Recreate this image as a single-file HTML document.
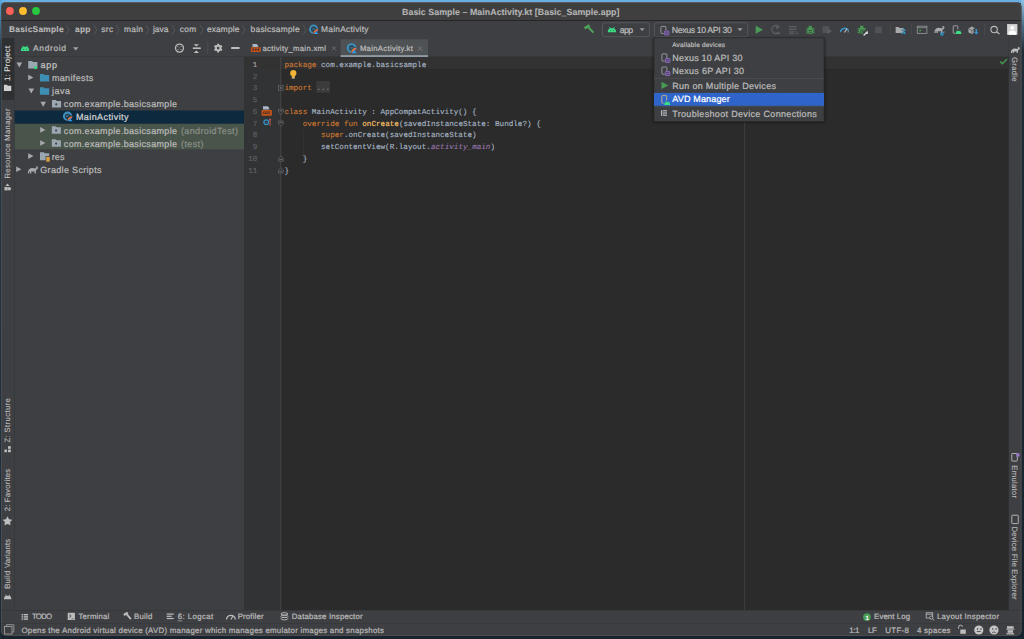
<!DOCTYPE html>
<html><head><meta charset="utf-8"><title>Android Studio</title>
<style>
*{margin:0;padding:0}
html,body{width:1024px;height:639px;overflow:hidden;background:#1b2630}
svg{position:absolute;left:0;top:0;display:block}
text{white-space:pre}
</style></head><body>
<svg width="1024" height="639" viewBox="0 0 1024 639" text-rendering="geometricPrecision">
<defs><linearGradient id="gl" x1="0" y1="0" x2="0" y2="1"><stop offset="0" stop-color="#5aa6e0"/><stop offset="0.03" stop-color="#3f7aa6"/><stop offset="0.08" stop-color="#203444"/><stop offset="1" stop-color="#1a2a35"/></linearGradient><linearGradient id="gr" x1="0" y1="0" x2="0" y2="1"><stop offset="0" stop-color="#8fc0e4"/><stop offset="0.04" stop-color="#4a6f8a"/><stop offset="0.08" stop-color="#1d2c36"/><stop offset="1" stop-color="#17232c"/></linearGradient><clipPath id="wclip"><rect x="1" y="2" width="1020.5" height="633.8" rx="5"/></clipPath></defs>
<rect x="0" y="0" width="1024" height="639" fill="#17232d" />
<rect x="0" y="0" width="1024" height="3" fill="#66aee2" />
<rect x="0" y="0" width="2" height="639" fill="url(#gl)" />
<rect x="1021" y="0" width="3" height="639" fill="url(#gr)" />
<g clip-path="url(#wclip)">
<rect x="0" y="0" width="1024" height="639" fill="#3e3f42" />
<rect x="0" y="0" width="1024" height="20" fill="#3e3f3e" />
<rect x="0" y="2" width="1024" height="0.6" fill="#5a5a5a" />
<rect x="0" y="20" width="1024" height="1" fill="#262626" />
<circle cx="9.9" cy="11" r="3.9" fill="#fe5f57" />
<circle cx="23" cy="11" r="3.9" fill="#febc2e" />
<circle cx="36" cy="11" r="3.9" fill="#28c840" />
<text x="402" y="14.6" fill="#b4b4b4" font-size="8.84" font-family='"Liberation Sans", sans-serif' font-weight="bold" textLength="217.5" lengthAdjust="spacing" stroke="#b4b4b4" stroke-width="0.11">Basic Sample – MainActivity.kt [Basic_Sample.app]</text>
<rect x="0" y="21" width="1024" height="17" fill="#3e3f42" />
<rect x="0" y="38.4" width="1024" height="0.7" fill="#333435" />
<text x="9" y="32.4" fill="#bbbbbb" font-size="8.36" font-family='"Liberation Sans", sans-serif' font-weight="bold" textLength="54.6" lengthAdjust="spacing" stroke="#bbbbbb" stroke-width="0.11">BasicSample</text>
<text x="75" y="32.4" fill="#bbbbbb" font-size="8.36" font-family='"Liberation Sans", sans-serif' font-weight="bold" textLength="15.4" lengthAdjust="spacing" stroke="#bbbbbb" stroke-width="0.11">app</text>
<text x="101.3" y="32.4" fill="#bbbbbb" font-size="8.36" font-family='"Liberation Sans", sans-serif' textLength="11.9" lengthAdjust="spacing" stroke="#bbbbbb" stroke-width="0.22">src</text>
<text x="124" y="32.4" fill="#bbbbbb" font-size="8.36" font-family='"Liberation Sans", sans-serif' textLength="18.9" lengthAdjust="spacing" stroke="#bbbbbb" stroke-width="0.22">main</text>
<text x="153" y="32.4" fill="#bbbbbb" font-size="8.36" font-family='"Liberation Sans", sans-serif' textLength="15.3" lengthAdjust="spacing" stroke="#bbbbbb" stroke-width="0.22">java</text>
<text x="179.8" y="32.4" fill="#bbbbbb" font-size="8.36" font-family='"Liberation Sans", sans-serif' textLength="16.4" lengthAdjust="spacing" stroke="#bbbbbb" stroke-width="0.22">com</text>
<text x="206.9" y="32.4" fill="#bbbbbb" font-size="8.36" font-family='"Liberation Sans", sans-serif' textLength="32.4" lengthAdjust="spacing" stroke="#bbbbbb" stroke-width="0.22">example</text>
<text x="250.6" y="32.4" fill="#bbbbbb" font-size="8.36" font-family='"Liberation Sans", sans-serif' textLength="49.0" lengthAdjust="spacing" stroke="#bbbbbb" stroke-width="0.22">basicsample</text>
<path d="M66,25 L69.2,29.9 L66,34.8" fill="none" stroke="#595c5e" stroke-width="0.75" />
<path d="M93.7,25 L96.9,29.9 L93.7,34.8" fill="none" stroke="#595c5e" stroke-width="0.75" />
<path d="M116,25 L119.2,29.9 L116,34.8" fill="none" stroke="#595c5e" stroke-width="0.75" />
<path d="M145.6,25 L148.79999999999998,29.9 L145.6,34.8" fill="none" stroke="#595c5e" stroke-width="0.75" />
<path d="M171.6,25 L174.79999999999998,29.9 L171.6,34.8" fill="none" stroke="#595c5e" stroke-width="0.75" />
<path d="M200,25 L203.2,29.9 L200,34.8" fill="none" stroke="#595c5e" stroke-width="0.75" />
<path d="M242,25 L245.2,29.9 L242,34.8" fill="none" stroke="#595c5e" stroke-width="0.75" />
<path d="M303,25 L306.2,29.9 L303,34.8" fill="none" stroke="#595c5e" stroke-width="0.75" />
<circle cx="313.6" cy="29.2" r="3.5879999999999996" fill="none" stroke="#3d8fbd" stroke-width="2.024"/>
<circle cx="313.6" cy="29.2" r="2.576" fill="#2c4656" />
<path d="M312.22,29.099999999999998 h2.76" fill="none" stroke="#3d8fbd" stroke-width="0.828" />
<path d="M313.192,34.622 L319.322,28.491999999999997 L315.624,28.491999999999997 L312.892,31.223999999999997 z" fill="#3e3f42" />
<path d="M313.692,34.122 L318.522,29.291999999999998 L316.107,29.291999999999998 L313.692,31.706999999999997 z" fill="#f18e1c" />
<path d="M313.692,34.122 L318.522,29.291999999999998 L317.3145,29.291999999999998 L313.692,32.9145 z" fill="#d0508a" />
<path d="M313.392,34.422 L316.107,31.506999999999998 L318.822,34.422 z" fill="#3e3f42" />
<path d="M313.692,34.122 L316.107,31.706999999999997 L318.522,34.122 z" fill="#2ea2f0" />
<text x="321" y="32.4" fill="#bbbbbb" font-size="8.36" font-family='"Liberation Sans", sans-serif' textLength="47.5" lengthAdjust="spacing" stroke="#bbbbbb" stroke-width="0.22">MainActivity</text>
<line x1="584.6" y1="28.4" x2="589.4" y2="25.4" stroke="#4fa35a" stroke-width="2.5" />
<line x1="588.2" y1="27.0" x2="593.4" y2="32.6" stroke="#4fa35a" stroke-width="2.1" />
<rect x="602.5" y="22.8" width="46.9" height="13.9" fill="none" rx="2" stroke="#5b5e60" stroke-width="0.8"/>
<path d="M607.8,32.3 C607.8,28.609999999999996 609.4399999999999,28.199999999999996 611.9,28.199999999999996 C614.3599999999999,28.199999999999996 616.0,28.609999999999996 616.0,32.3 z" fill="#3ddc84" />
<line x1="609.6039999999999" y1="27.051999999999996" x2="610.506" y2="29.224999999999994" stroke="#3ddc84" stroke-width="0.82" />
<line x1="614.1959999999999" y1="27.051999999999996" x2="613.294" y2="29.224999999999994" stroke="#3ddc84" stroke-width="0.82" />
<circle cx="610.26" cy="30.455" r="0.49199999999999994" fill="#3e3f42" />
<circle cx="613.54" cy="30.455" r="0.49199999999999994" fill="#3e3f42" />
<text x="619.7" y="32.6" fill="#bbbbbb" font-size="8.74" font-family='"Liberation Sans", sans-serif' textLength="13.3" lengthAdjust="spacing" stroke="#bbbbbb" stroke-width="0.22">app</text>
<path d="M639.6,28.3 h5 l-2.5,2.8 z" fill="#9a9da0" />
<rect x="654.4" y="22.8" width="93.3" height="13.9" fill="none" rx="2" stroke="#5b5e60" stroke-width="0.8"/>
<rect x="660.9" y="26.400000000000002" width="5" height="7.2" fill="none" rx="0.8" stroke="#9ca3aa" stroke-width="0.9"/>
<rect x="663.6" y="30.400000000000002" width="5.6" height="5" fill="#3e3f42" />
<rect x="664.3" y="31.0" width="4.6" height="4.0" fill="#5a4377" rx="0.6" stroke="#9876c8" stroke-width="0.8"/>
<line x1="665.2" y1="33.0" x2="668.0" y2="33.0" stroke="#9876c8" stroke-width="0.6" />
<text x="671.7" y="32.6" fill="#bbbbbb" font-size="8.74" font-family='"Liberation Sans", sans-serif' textLength="60.1" lengthAdjust="spacing" stroke="#bbbbbb" stroke-width="0.22">Nexus 10 API 30</text>
<path d="M737.3,28.3 h5.4 l-2.7,2.8 z" fill="#9a9da0" />
<path d="M755.7,25.7 L763,29.7 L755.7,33.7 z" fill="#499c54" />
<path d="M779,27 A4,4 0 1 0 779,32" fill="none" stroke="#5a5d60" stroke-width="1.3" />
<path d="M776,24.8 l3.8,2.4 l-3.4,2.2 z" fill="#5a5d60" />
<path d="M777,32.5 l3,1.5 M777,34 l3,-1.5" fill="none" stroke="#5a5d60" stroke-width="0.9" />
<rect x="789" y="26" width="7.5" height="1.4" fill="#5a5d60" />
<rect x="789" y="28.6" width="7.5" height="1.4" fill="#5a5d60" />
<rect x="789" y="31.2" width="5" height="1.4" fill="#5a5d60" />
<rect x="789" y="33.3" width="5" height="1" fill="#5a5d60" />
<path d="M796,31 v2.5 h2.5" fill="none" stroke="#5a5d60" stroke-width="0.9" />
<ellipse cx="810.3" cy="30.7" rx="2.9" ry="3.3" fill="#499c54"/>
<circle cx="810.3" cy="27.6" r="1.7" fill="#499c54" />
<line x1="808.6999999999999" y1="25.5" x2="809.5" y2="26.7" stroke="#499c54" stroke-width="0.8" />
<line x1="811.9" y1="25.5" x2="811.0999999999999" y2="26.7" stroke="#499c54" stroke-width="0.8" />
<line x1="806.0999999999999" y1="28.900000000000002" x2="807.9" y2="28.900000000000002" stroke="#499c54" stroke-width="1.0" />
<line x1="812.6999999999999" y1="28.900000000000002" x2="814.5" y2="28.900000000000002" stroke="#499c54" stroke-width="1.0" />
<line x1="806.0999999999999" y1="30.900000000000002" x2="807.9" y2="30.900000000000002" stroke="#499c54" stroke-width="1.0" />
<line x1="812.6999999999999" y1="30.900000000000002" x2="814.5" y2="30.900000000000002" stroke="#499c54" stroke-width="1.0" />
<line x1="806.0999999999999" y1="32.9" x2="807.9" y2="32.9" stroke="#499c54" stroke-width="1.0" />
<line x1="812.6999999999999" y1="32.9" x2="814.5" y2="32.9" stroke="#499c54" stroke-width="1.0" />
<rect x="808.5" y="29.900000000000002" width="3.6" height="0.8" fill="#3e3f42" />
<rect x="808.5" y="31.8" width="3.6" height="0.8" fill="#3e3f42" />
<path d="M822.5,26 h5 a2,2 0 0 1 2,2 v3 l-2,2 h-5 z" fill="#505356" />
<path d="M827.5,28.5 L832,31.3 L827.5,34 z" fill="#5a5d60" />
<path d="M840.5,32.3 A4.3,4.3 0 0 1 848.5,30.5" fill="none" stroke="#3592c4" stroke-width="1.5" />
<path d="M844.5,32.5 l2.5,-4" fill="none" stroke="#bbbbbb" stroke-width="1.2" />
<path d="M847.2,32.3 l1.6,-1.6 v1.6 z" fill="#aaaaaa" />
<ellipse cx="861.8" cy="30.5" rx="2.9" ry="3.3" fill="#499c54"/>
<circle cx="861.8" cy="27.400000000000002" r="1.7" fill="#499c54" />
<line x1="860.1999999999999" y1="25.3" x2="861.0" y2="26.5" stroke="#499c54" stroke-width="0.8" />
<line x1="863.4" y1="25.3" x2="862.5999999999999" y2="26.5" stroke="#499c54" stroke-width="0.8" />
<line x1="857.5999999999999" y1="28.700000000000003" x2="859.4" y2="28.700000000000003" stroke="#499c54" stroke-width="1.0" />
<line x1="864.1999999999999" y1="28.700000000000003" x2="866.0" y2="28.700000000000003" stroke="#499c54" stroke-width="1.0" />
<line x1="857.5999999999999" y1="30.700000000000003" x2="859.4" y2="30.700000000000003" stroke="#499c54" stroke-width="1.0" />
<line x1="864.1999999999999" y1="30.700000000000003" x2="866.0" y2="30.700000000000003" stroke="#499c54" stroke-width="1.0" />
<line x1="857.5999999999999" y1="32.7" x2="859.4" y2="32.7" stroke="#499c54" stroke-width="1.0" />
<line x1="864.1999999999999" y1="32.7" x2="866.0" y2="32.7" stroke="#499c54" stroke-width="1.0" />
<rect x="860.0" y="29.700000000000003" width="3.6" height="0.8" fill="#3e3f42" />
<rect x="860.0" y="31.6" width="3.6" height="0.8" fill="#3e3f42" />
<rect x="863.2" y="30.6" width="5.5" height="5.5" fill="#3e3f42" />
<path d="M863.6,35.5 l3.6,-3.6" fill="none" stroke="#dddddd" stroke-width="1.3" />
<path d="M867.8,30.8 v3.3 h-3.3 z" fill="#dddddd" />
<rect x="875.2" y="26.6" width="6.8" height="6.6" fill="#505356" />
<line x1="890.2" y1="23.5" x2="890.2" y2="35" stroke="#4a4d4f" stroke-width="0.8" />
<line x1="911.4" y1="23.5" x2="911.4" y2="35" stroke="#4a4d4f" stroke-width="0.8" />
<line x1="984.5" y1="23.5" x2="984.5" y2="35" stroke="#4a4d4f" stroke-width="0.8" />
<path d="M895.6,27 h3 l1,1 h4 v5 h-8 z" fill="#a7a9ab" />
<rect x="901.5" y="29.2" width="1.6" height="1.8" fill="#3592c4" />
<rect x="903.8" y="29.2" width="1.6" height="1.8" fill="#3592c4" />
<rect x="901.5" y="31.8" width="1.6" height="2.2" fill="#3592c4" />
<rect x="903.8" y="31.8" width="1.6" height="2.2" fill="#3592c4" />
<rect x="917.3" y="26.2" width="9.6" height="7.2" fill="none" stroke="#8e9194" stroke-width="0.9"/>
<line x1="917.3" y1="27.6" x2="926.9" y2="27.6" stroke="#8e9194" stroke-width="0.8" />
<path d="M919.5,29 l2.3,1.4 l-2.3,1.4 z" fill="#499c54" />
<path d="M934.3,33 c0,-3.5 2,-5.2 4.6,-5.2 c1.7,0 2.6,0.8 3.6,0.1 c0.7,-0.5 0.4,-1.6 -0.5,-1.5 c1.4,-0.9 2.9,0.2 2.4,1.7 c-0.4,1.2 -1.6,1.5 -2,2.1 v2.8 h-1.4 v-1.8 h-3.2 v1.8 h-1.4 v-1.8 h-0.8 v1.8 z" fill="#a7a9ab" />
<path d="M941,35 l3.5,-3.5" fill="none" stroke="#3592c4" stroke-width="1.3" />
<path d="M940.5,31.8 v3.6 h3.6 z" fill="#3592c4" />
<rect x="953.2" y="25.8" width="4.6" height="7.5" fill="none" rx="0.6" stroke="#a7a9ab" stroke-width="0.9"/>
<rect x="955" y="29.4" width="6.8" height="5" fill="#3e3f42" />
<path d="M955.6,34.0 C955.6,31.39 956.76,31.1 958.5,31.1 C960.24,31.1 961.4,31.39 961.4,34.0 z" fill="#3ddc84" />
<line x1="956.876" y1="30.288" x2="957.514" y2="31.825000000000003" stroke="#3ddc84" stroke-width="0.6" />
<line x1="960.124" y1="30.288" x2="959.486" y2="31.825000000000003" stroke="#3ddc84" stroke-width="0.6" />
<path d="M968.4,28.5 l3.5,-1.9 l3.5,1.9 v3.8 l-3.5,1.9 l-3.5,-1.9 z" fill="#a7a9ab" />
<path d="M968.4,28.5 l3.5,1.9 l3.5,-1.9 M971.9,30.4 v3.8" fill="none" stroke="#3e3f42" stroke-width="0.6" />
<rect x="973.6" y="28.6" width="5.4" height="6.6" fill="#3e3f42" />
<path d="M976.3,29 v3.4" fill="none" stroke="#3592c4" stroke-width="1.7" />
<path d="M974.1,32.0 h4.4 l-2.2,2.7 z" fill="#3592c4" />
<circle cx="994.1" cy="29.6" r="3.2" fill="none" stroke="#bbbbbb" stroke-width="1.1"/>
<line x1="996.5" y1="32" x2="999.6" y2="34" stroke="#bbbbbb" stroke-width="1.2" />
<rect x="1007.1" y="24.1" width="10.3" height="10.7" fill="#d6d6d6" />
<circle cx="1012.3" cy="27.8" r="1.9" fill="#ffffff" />
<path d="M1008.6,34.8 v-1.6 a3.7,2.6 0 0 1 7.4,0 v1.6 z" fill="#ffffff" />
<rect x="1" y="38" width="13" height="572" fill="#3e3f42" />
<rect x="1.5" y="38" width="12.6" height="61.7" fill="#2e3032" />
<rect x="14" y="38" width="0.7" height="572" fill="#323436" />
<text x="0" y="0" fill="#dadada" font-size="8.0" font-family='"Liberation Sans", sans-serif' textLength="35.2" lengthAdjust="spacing" transform="translate(10.4,81.0) rotate(-90)" stroke="#dadada" stroke-width="0.12">1: Project</text>
<path d="M3.9,84.8 h3 l1,1 h3.4 v5.2 h-7.4 z" fill="#d0d0d0" />
<text x="0" y="0" fill="#bbbbbb" font-size="7.7" font-family='"Liberation Sans", sans-serif' textLength="70.0" lengthAdjust="spacing" transform="translate(10.1,178.5) rotate(-90)" stroke="#bbbbbb" stroke-width="0.12">Resource Manager</text>
<path d="M7.5,183.5 l2,2.6 h-4 z" fill="#bdbdbd" />
<rect x="4.5" y="187" width="3.2" height="3.4" fill="#bdbdbd" />
<circle cx="9.3" cy="188.7" r="1.7" fill="#bdbdbd" />
<text x="0" y="0" fill="#bbbbbb" font-size="7.7" font-family='"Liberation Sans", sans-serif' textLength="44.4" lengthAdjust="spacing" transform="translate(10.1,442.6) rotate(-90)" stroke="#bbbbbb" stroke-width="0.12">Z: Structure</text>
<rect x="4.4" y="449.6" width="2.6" height="2.6" fill="#bdbdbd" />
<rect x="8.0" y="446.2" width="2.8" height="2.6" fill="#bdbdbd" />
<rect x="8.0" y="449.6" width="2.8" height="2.6" fill="#bdbdbd" />
<text x="0" y="0" fill="#bbbbbb" font-size="7.7" font-family='"Liberation Sans", sans-serif' textLength="42.5" lengthAdjust="spacing" transform="translate(10.1,511.3) rotate(-90)" stroke="#bbbbbb" stroke-width="0.12">2: Favorites</text>
<path d="M7.5,516.3 l1.6,2.9 l3.2,0.6 l-2.2,2.3 l0.4,3.2 l-3,-1.4 l-3,1.4 l0.4,-3.2 l-2.2,-2.3 l3.2,-0.6 z" fill="#bdbdbd" />
<text x="0" y="0" fill="#bbbbbb" font-size="7.7" font-family='"Liberation Sans", sans-serif' textLength="50.0" lengthAdjust="spacing" transform="translate(10.1,588.8) rotate(-90)" stroke="#bbbbbb" stroke-width="0.12">Build Variants</text>
<path d="M4.0,599.3 C4.0,596.015 5.46,595.65 7.65,595.65 C9.84,595.65 11.3,596.015 11.3,599.3 z" fill="#bdbdbd" />
<line x1="5.606" y1="594.6279999999999" x2="6.409000000000001" y2="596.5625" stroke="#bdbdbd" stroke-width="0.73" />
<line x1="9.693999999999999" y1="594.6279999999999" x2="8.891" y2="596.5625" stroke="#bdbdbd" stroke-width="0.73" />
<rect x="1008.6" y="38" width="13" height="572" fill="#3e3f42" />
<rect x="1008.4" y="38" width="0.6" height="572" fill="#323436" />
<path d="M1010.8,53 c0,-3 1.7,-4.6 4,-4.6 c1.5,0 2.3,0.7 3.2,0.1 c0.6,-0.4 0.3,-1.4 -0.4,-1.3 c1.2,-0.8 2.5,0.2 2.1,1.5 c-0.3,1 -1.4,1.3 -1.8,1.8 v2.5 h-1.2 v-1.6 h-2.8 v1.6 h-1.2 v-1.6 h-0.7 v1.6 z" fill="#bdbdbd" />
<text x="0" y="0" fill="#bbbbbb" font-size="7.7" font-family='"Liberation Sans", sans-serif' textLength="24.6" lengthAdjust="spacing" transform="translate(1012.1999999999999,57) rotate(90)" stroke="#bbbbbb" stroke-width="0.12">Gradle</text>
<rect x="1011.8" y="453.5" width="5.5" height="7.6" fill="none" rx="0.6" stroke="#bdbdbd" stroke-width="0.9"/>
<rect x="1016.3" y="453.3" width="3.2" height="3.2" fill="#9876c8" />
<text x="0" y="0" fill="#bbbbbb" font-size="7.7" font-family='"Liberation Sans", sans-serif' textLength="32.7" lengthAdjust="spacing" transform="translate(1012.1999999999999,465.3) rotate(90)" stroke="#bbbbbb" stroke-width="0.12">Emulator</text>
<rect x="1011.8" y="515.2" width="6.5" height="8.4" fill="none" rx="0.6" stroke="#bdbdbd" stroke-width="0.9"/>
<text x="0" y="0" fill="#bbbbbb" font-size="7.7" font-family='"Liberation Sans", sans-serif' textLength="73.2" lengthAdjust="spacing" transform="translate(1012.1999999999999,526.4) rotate(90)" stroke="#bbbbbb" stroke-width="0.12">Device File Explorer</text>
<rect x="14.7" y="38" width="229.3" height="572" fill="#3e3f42" />
<rect x="14.7" y="56.2" width="229.3" height="0.6" fill="#323436" />
<path d="M20.9,51.0 C20.9,47.265 22.56,46.85 25.049999999999997,46.85 C27.54,46.85 29.2,47.265 29.2,51.0 z" fill="#3ddc84" />
<line x1="22.726" y1="45.688" x2="23.639" y2="47.8875" stroke="#3ddc84" stroke-width="0.8300000000000001" />
<line x1="27.374" y1="45.688" x2="26.461" y2="47.8875" stroke="#3ddc84" stroke-width="0.8300000000000001" />
<circle cx="23.39" cy="49.1325" r="0.498" fill="#3e3f42" />
<circle cx="26.71" cy="49.1325" r="0.498" fill="#3e3f42" />
<text x="33.1" y="51.1" fill="#bbbbbb" font-size="8.46" font-family='"Liberation Sans", sans-serif' textLength="32.9" lengthAdjust="spacing" stroke="#bbbbbb" stroke-width="0.22">Android</text>
<path d="M73,47.2 h5.5 l-2.75,3.3 z" fill="#a0a3a5" />
<circle cx="179.5" cy="48.1" r="4.0" fill="none" stroke="#bdbdbd" stroke-width="1.3"/>
<line x1="180.34852813742387" y1="48.94852813742386" x2="181.76274169979695" y2="50.362741699796956" stroke="#a9abad" stroke-width="0.9" />
<line x1="178.65147186257613" y1="48.94852813742386" x2="177.23725830020305" y2="50.362741699796956" stroke="#a9abad" stroke-width="0.9" />
<line x1="178.65147186257613" y1="47.251471862576146" x2="177.23725830020305" y2="45.83725830020305" stroke="#a9abad" stroke-width="0.9" />
<line x1="180.34852813742387" y1="47.251471862576146" x2="181.76274169979695" y2="45.83725830020305" stroke="#a9abad" stroke-width="0.9" />
<path d="M193.6,44.2 h5.4 l-2.7,2.4 z" fill="#bdbdbd" />
<path d="M193.6,53.0 h5.4 l-2.7,-2.4 z" fill="#bdbdbd" />
<rect x="192.8" y="47.4" width="8" height="1.6" fill="#bdbdbd" />
<line x1="207.7" y1="41.5" x2="207.7" y2="54" stroke="#4f5254" stroke-width="0.8" />
<line x1="220.10525588832576" y1="49.2" x2="221.92390923627306" y2="50.25" stroke="#bdbdbd" stroke-width="2.0" />
<line x1="218.2" y1="50.300000000000004" x2="218.2" y2="52.4" stroke="#bdbdbd" stroke-width="2.0" />
<line x1="216.29474411167422" y1="49.2" x2="214.47609076372692" y2="50.25" stroke="#bdbdbd" stroke-width="2.0" />
<line x1="216.29474411167422" y1="47.0" x2="214.47609076372692" y2="45.95" stroke="#bdbdbd" stroke-width="2.0" />
<line x1="218.2" y1="45.9" x2="218.2" y2="43.800000000000004" stroke="#bdbdbd" stroke-width="2.0" />
<line x1="220.10525588832576" y1="47.0" x2="221.92390923627306" y2="45.95" stroke="#bdbdbd" stroke-width="2.0" />
<circle cx="218.2" cy="48.1" r="3.3" fill="#bdbdbd" />
<circle cx="218.2" cy="48.1" r="1.3" fill="#3e3f42" />
<rect x="231.1" y="47.0" width="8.5" height="2.0" fill="#bdbdbd" rx="0.5" />
<rect x="14.7" y="110.5" width="229.3" height="13.3" fill="#0d293e" />
<rect x="14.7" y="123.8" width="229.3" height="25.6" fill="#49544a" />
<path d="M16.5,62.4 h5.6 l-2.8,5 z" fill="#a7a9ab" />
<path d="M28.2,61 h3.8 l1,1 h4.4 v6.6 h-9.2 z" fill="#9aa7b0" />
<circle cx="35.6" cy="67.6" r="1.6" fill="#3ddc84" />
<text x="40.4" y="68.0" fill="#c4c4c4" font-size="9.03" font-family='"Liberation Sans", sans-serif' textLength="16.6" lengthAdjust="spacing" stroke="#c4c4c4" stroke-width="0.22">app</text>
<path d="M28.2,74.69999999999999 v5.6 l5.2,-2.8 z" fill="#a7a9ab" />
<path d="M39.9,74.1 h3.8 l1,1 h4.5 v6.5 h-9.3 z" fill="#3e8db3" />
<text x="51.9" y="81.1" fill="#bbbbbb" font-size="9.03" font-family='"Liberation Sans", sans-serif' textLength="41.4" lengthAdjust="spacing" stroke="#bbbbbb" stroke-width="0.22">manifests</text>
<path d="M28.5,88.60000000000001 h5.6 l-2.8,5 z" fill="#a7a9ab" />
<path d="M39.9,87.2 h3.8 l1,1 h4.5 v6.5 h-9.3 z" fill="#3e8db3" />
<text x="51.9" y="94.2" fill="#bbbbbb" font-size="9.03" font-family='"Liberation Sans", sans-serif' textLength="18.1" lengthAdjust="spacing" stroke="#bbbbbb" stroke-width="0.22">java</text>
<path d="M40.4,101.7 h5.6 l-2.8,5 z" fill="#a7a9ab" />
<path d="M52,100.0 h3.8 l1,1 h4.3 v6.5 h-9.1 z" fill="#9aa7b0" />
<circle cx="56.3" cy="104.3" r="1.1" fill="#3e3f42" />
<text x="63.8" y="107.3" fill="#bbbbbb" font-size="9.03" font-family='"Liberation Sans", sans-serif' textLength="113.2" lengthAdjust="spacing" stroke="#bbbbbb" stroke-width="0.22">com.example.basicsample</text>
<circle cx="67.6" cy="116.3" r="3.6660000000000004" fill="none" stroke="#3d8fbd" stroke-width="2.068"/>
<circle cx="67.6" cy="116.3" r="2.6320000000000006" fill="#2c4656" />
<path d="M66.19,116.2 h2.82" fill="none" stroke="#3d8fbd" stroke-width="0.846" />
<path d="M67.19399999999999,121.829 L73.42899999999999,115.594 L69.66799999999999,115.594 L66.89399999999999,118.368 z" fill="#0d293e" />
<path d="M67.69399999999999,121.329 L72.62899999999999,116.39399999999999 L70.16149999999999,116.39399999999999 L67.69399999999999,118.86149999999999 z" fill="#f18e1c" />
<path d="M67.69399999999999,121.329 L72.62899999999999,116.39399999999999 L71.39524999999999,116.39399999999999 L67.69399999999999,120.09525 z" fill="#d0508a" />
<path d="M67.39399999999999,121.62899999999999 L70.16149999999999,118.66149999999999 L72.92899999999999,121.62899999999999 z" fill="#0d293e" />
<path d="M67.69399999999999,121.329 L70.16149999999999,118.86149999999999 L72.62899999999999,121.329 z" fill="#2ea2f0" />
<text x="75.9" y="120.4" fill="#d4d4d4" font-size="9.03" font-family='"Liberation Sans", sans-serif' textLength="52.6" lengthAdjust="spacing" stroke="#d4d4d4" stroke-width="0.22">MainActivity</text>
<path d="M40.2,127.1 v5.6 l5.2,-2.8 z" fill="#a7a9ab" />
<path d="M51.8,126.2 h3.8 l1,1 h4.3 v6.5 h-9.1 z" fill="#9aa7b0" />
<circle cx="56.099999999999994" cy="130.5" r="1.1" fill="#3e3f42" />
<text x="63.8" y="133.5" fill="#bbbbbb" font-size="9.03" font-family='"Liberation Sans", sans-serif' textLength="113.2" lengthAdjust="spacing" stroke="#bbbbbb" stroke-width="0.22">com.example.basicsample</text>
<text x="181" y="133.5" fill="#8a8f89" font-size="9.03" font-family='"Liberation Sans", sans-serif' textLength="57" lengthAdjust="spacing" stroke="#8a8f89" stroke-width="0.22">(androidTest)</text>
<path d="M40.2,140.2 v5.6 l5.2,-2.8 z" fill="#a7a9ab" />
<path d="M51.8,139.29999999999998 h3.8 l1,1 h4.3 v6.5 h-9.1 z" fill="#9aa7b0" />
<circle cx="56.099999999999994" cy="143.6" r="1.1" fill="#3e3f42" />
<text x="63.8" y="146.6" fill="#bbbbbb" font-size="9.03" font-family='"Liberation Sans", sans-serif' textLength="113.2" lengthAdjust="spacing" stroke="#bbbbbb" stroke-width="0.22">com.example.basicsample</text>
<text x="181" y="146.6" fill="#8a8f89" font-size="9.03" font-family='"Liberation Sans", sans-serif' textLength="22.5" lengthAdjust="spacing" stroke="#8a8f89" stroke-width="0.22">(test)</text>
<path d="M28.2,153.29999999999998 v5.6 l5.2,-2.8 z" fill="#a7a9ab" />
<path d="M40,152.29999999999998 h3.8 l1,1 h4.4 v7 h-9.2 z" fill="#9aa7b0" />
<rect x="45.6" y="156.1" width="4.4" height="5.6" fill="#3e3f42" />
<rect x="46.2" y="156.89999999999998" width="3.6" height="4.8" fill="#d69d42" />
<text x="51.8" y="159.7" fill="#bbbbbb" font-size="9.03" font-family='"Liberation Sans", sans-serif' textLength="12.6" lengthAdjust="spacing" stroke="#bbbbbb" stroke-width="0.22">res</text>
<path d="M16.2,166.4 v5.6 l5.2,-2.8 z" fill="#a7a9ab" />
<path d="M27.8,173.4 c0,-3.6 2,-5.4 4.6,-5.4 c1.7,0 2.6,0.8 3.6,0.1 c0.7,-0.5 0.4,-1.6 -0.5,-1.5 c1.4,-0.9 2.9,0.2 2.4,1.7 c-0.4,1.2 -1.6,1.5 -2,2.1 v3 h-1.4 v-1.9 h-3.2 v1.9 h-1.4 v-1.9 h-0.8 v1.9 z" fill="#a7a9ab" />
<text x="40.3" y="172.8" fill="#bbbbbb" font-size="9.03" font-family='"Liberation Sans", sans-serif' textLength="61.2" lengthAdjust="spacing" stroke="#bbbbbb" stroke-width="0.22">Gradle Scripts</text>
<rect x="244" y="38" width="764.6" height="19" fill="#3e3f42" />
<rect x="244" y="56.4" width="764.6" height="0.6" fill="#323436" />
<rect x="244" y="57" width="764.6" height="553" fill="#2b2b2b" />
<rect x="244" y="57" width="36.6" height="553" fill="#313335" />
<rect x="244" y="57" width="764.6" height="11.8" fill="#323232" />
<rect x="280.4" y="57" width="0.8" height="553" fill="#4a4c4e" />
<rect x="744.2" y="57" width="0.9" height="553" fill="#414141" />
<rect x="340.7" y="39.2" width="87.3" height="17.8" fill="#4e5254" />
<rect x="340.7" y="55.1" width="87.3" height="1.9" fill="#8f9aa3" />
<path d="M252.5,47 v-3 h4 l1.5,1.5 v1.5 z" fill="#a9b7c6" />
<rect x="251" y="47.3" width="9.7" height="4.6" fill="#cc5416" />
<rect x="252.4" y="48.6" width="1.5" height="2" fill="#2b2b2b" />
<rect x="255" y="48.6" width="1.5" height="2" fill="#2b2b2b" />
<rect x="257.6" y="48.6" width="1.5" height="2" fill="#2b2b2b" />
<text x="262.5" y="50.7" fill="#bbbbbb" font-size="7.69" font-family='"Liberation Sans", sans-serif' textLength="63.5" lengthAdjust="spacing" stroke="#bbbbbb" stroke-width="0.22">activity_main.xml</text>
<path d="M332,46.3 l4,4 M336,46.3 l-4,4" fill="none" stroke="#6e7173" stroke-width="0.9" />
<circle cx="351.6" cy="48" r="3.7439999999999998" fill="none" stroke="#3d8fbd" stroke-width="2.112"/>
<circle cx="351.6" cy="48" r="2.688" fill="#2c4656" />
<path d="M350.16,47.9 h2.88" fill="none" stroke="#3d8fbd" stroke-width="0.864" />
<path d="M351.196,53.635999999999996 L357.53600000000006,47.296 L353.71200000000005,47.296 L350.896,50.111999999999995 z" fill="#4e5254" />
<path d="M351.696,53.135999999999996 L356.73600000000005,48.096 L354.216,48.096 L351.696,50.616 z" fill="#f18e1c" />
<path d="M351.696,53.135999999999996 L356.73600000000005,48.096 L355.476,48.096 L351.696,51.876 z" fill="#d0508a" />
<path d="M351.396,53.43599999999999 L354.216,50.416 L357.03600000000006,53.43599999999999 z" fill="#4e5254" />
<path d="M351.696,53.135999999999996 L354.216,50.616 L356.73600000000005,53.135999999999996 z" fill="#2ea2f0" />
<text x="359.9" y="50.7" fill="#bbbbbb" font-size="7.69" font-family='"Liberation Sans", sans-serif' textLength="53.0" lengthAdjust="spacing" stroke="#bbbbbb" stroke-width="0.22">MainActivity.kt</text>
<path d="M418.3,46.5 l4,4 M422.3,46.5 l-4,4" fill="none" stroke="#7b7e80" stroke-width="0.9" />
<text x="252.72" y="66.9" fill="#a4a3a3" font-size="7.63" font-family='"Liberation Mono", monospace' stroke="#a4a3a3" stroke-width="0.12">1</text>
<text x="252.72" y="78.655" fill="#606366" font-size="7.63" font-family='"Liberation Mono", monospace' stroke="#606366" stroke-width="0.12">2</text>
<text x="252.72" y="90.41000000000001" fill="#606366" font-size="7.63" font-family='"Liberation Mono", monospace' stroke="#606366" stroke-width="0.12">3</text>
<text x="252.72" y="102.165" fill="#606366" font-size="7.63" font-family='"Liberation Mono", monospace' stroke="#606366" stroke-width="0.12">5</text>
<text x="252.72" y="113.92000000000002" fill="#606366" font-size="7.63" font-family='"Liberation Mono", monospace' stroke="#606366" stroke-width="0.12">6</text>
<text x="252.72" y="125.67500000000001" fill="#606366" font-size="7.63" font-family='"Liberation Mono", monospace' stroke="#606366" stroke-width="0.12">7</text>
<text x="252.72" y="137.43" fill="#606366" font-size="7.63" font-family='"Liberation Mono", monospace' stroke="#606366" stroke-width="0.12">8</text>
<text x="252.72" y="149.185" fill="#606366" font-size="7.63" font-family='"Liberation Mono", monospace' stroke="#606366" stroke-width="0.12">9</text>
<text x="248.14000000000001" y="160.94" fill="#606366" font-size="7.63" font-family='"Liberation Mono", monospace' stroke="#606366" stroke-width="0.12">10</text>
<text x="248.14000000000001" y="172.695" fill="#606366" font-size="7.63" font-family='"Liberation Mono", monospace' stroke="#606366" stroke-width="0.12">11</text>
<path d="M263,109.6 v-3.4 h4.6 l1.6,1.6 v1.8 z" fill="#a9b7c6" />
<rect x="261.6" y="110" width="10.2" height="5.7" fill="#cc5416" />
<rect x="263.3" y="111.6" width="6.8" height="2.4" fill="#2b2b2b" />
<rect x="264.2" y="112" width="1.2" height="1.6" fill="#cc5416" />
<rect x="266.3" y="112" width="1.2" height="1.6" fill="#cc5416" />
<rect x="268.4" y="112" width="1.2" height="1.6" fill="#cc5416" />
<circle cx="266.3" cy="122.3" r="2.4" fill="none" stroke="#3592c4" stroke-width="1.2"/>
<circle cx="266.3" cy="122.3" r="0.9" fill="#2f5c8a" />
<rect x="269.3" y="119.5" width="1.6" height="6.3" fill="#8c4b3c" />
<rect x="269.3" y="118.8" width="1.6" height="1.4" fill="#e0606c" />
<rect x="278.5" y="85.61000000000001" width="4.6" height="4.6" fill="#313335" stroke="#6c6e70" stroke-width="0.6"/>
<line x1="279.6" y1="87.91000000000001" x2="282" y2="87.91000000000001" stroke="#8a8c8e" stroke-width="0.6" />
<line x1="280.8" y1="86.71000000000001" x2="280.8" y2="89.11000000000001" stroke="#8a8c8e" stroke-width="0.6" />
<path d="M278.5,109.22000000000001 h4.8 v3 l-2.4,2.3 l-2.4,-2.3 z" fill="#313335" stroke="#6c6e70" stroke-width="0.6" />
<line x1="279.5" y1="110.92000000000002" x2="282.3" y2="110.92000000000002" stroke="#8a8c8e" stroke-width="0.6" />
<path d="M278.5,120.97500000000001 h4.8 v3 l-2.4,2.3 l-2.4,-2.3 z" fill="#313335" stroke="#6c6e70" stroke-width="0.6" />
<line x1="279.5" y1="122.67500000000001" x2="282.3" y2="122.67500000000001" stroke="#8a8c8e" stroke-width="0.6" />
<path d="M278.5,161.24 h4.8 v-3 l-2.4,-2.3 l-2.4,2.3 z" fill="#313335" stroke="#6c6e70" stroke-width="0.6" />
<line x1="279.5" y1="159.54000000000002" x2="282.3" y2="159.54000000000002" stroke="#8a8c8e" stroke-width="0.6" />
<path d="M278.5,172.995 h4.8 v-3 l-2.4,-2.3 l-2.4,2.3 z" fill="#313335" stroke="#6c6e70" stroke-width="0.6" />
<line x1="279.5" y1="171.29500000000002" x2="282.3" y2="171.29500000000002" stroke="#8a8c8e" stroke-width="0.6" />
<rect x="303.5" y="128.675" width="0.6" height="30" fill="#393939" />
<text x="284.4" y="66.9" fill="#cc7832" font-size="7.63" font-family='"Liberation Mono", monospace' stroke="#cc7832" stroke-width="0.12">package</text>
<text x="316.46" y="66.9" fill="#a9b7c6" font-size="7.63" font-family='"Liberation Mono", monospace' stroke="#a9b7c6" stroke-width="0.12"> com.example.basicsample</text>
<circle cx="293.3" cy="73.2" r="3.1" fill="#f0b537" />
<rect x="291.8" y="75.6" width="3" height="2.6" fill="#f0b537" />
<rect x="291.9" y="77.4" width="2.8" height="1.4" fill="#9a9a9a" />
<rect x="316.3" y="81" width="13.6" height="11.7" fill="#3b3b3b" />
<text x="284.4" y="90.41000000000001" fill="#cc7832" font-size="7.63" font-family='"Liberation Mono", monospace' stroke="#cc7832" stroke-width="0.12">import</text>
<text x="311.88" y="90.41000000000001" fill="#8a8a8a" font-size="7.63" font-family='"Liberation Mono", monospace' stroke="#8a8a8a" stroke-width="0.12"> ...</text>
<text x="284.4" y="113.92000000000002" fill="#cc7832" font-size="7.63" font-family='"Liberation Mono", monospace' stroke="#cc7832" stroke-width="0.12">class</text>
<text x="307.29999999999995" y="113.92000000000002" fill="#a9b7c6" font-size="7.63" font-family='"Liberation Mono", monospace' stroke="#a9b7c6" stroke-width="0.12"> MainActivity : AppCompatActivity() {</text>
<text x="284.4" y="125.67500000000001" fill="#cc7832" font-size="7.63" font-family='"Liberation Mono", monospace' stroke="#cc7832" stroke-width="0.12">    override fun</text>
<text x="362.26" y="125.67500000000001" fill="#ffc66d" font-size="7.63" font-family='"Liberation Mono", monospace' stroke="#ffc66d" stroke-width="0.12">onCreate</text>
<text x="398.9" y="125.67500000000001" fill="#a9b7c6" font-size="7.63" font-family='"Liberation Mono", monospace' stroke="#a9b7c6" stroke-width="0.12">(savedInstanceState: Bundle?) {</text>
<text x="284.4" y="137.43" fill="#cc7832" font-size="7.63" font-family='"Liberation Mono", monospace' stroke="#cc7832" stroke-width="0.12">        super</text>
<text x="343.94" y="137.43" fill="#a9b7c6" font-size="7.63" font-family='"Liberation Mono", monospace' stroke="#a9b7c6" stroke-width="0.12">.onCreate(savedInstanceState)</text>
<text x="284.4" y="149.185" fill="#a9b7c6" font-size="7.63" font-family='"Liberation Mono", monospace' stroke="#a9b7c6" stroke-width="0.12">        setContentView(R.layout.</text>
<text x="430.96" y="149.185" fill="#9876aa" font-size="7.63" font-family='"Liberation Mono", monospace' font-style="italic" stroke="#9876aa" stroke-width="0.12">activity_main</text>
<text x="490.5" y="149.185" fill="#a9b7c6" font-size="7.63" font-family='"Liberation Mono", monospace' stroke="#a9b7c6" stroke-width="0.12">)</text>
<text x="284.4" y="160.94" fill="#a9b7c6" font-size="7.63" font-family='"Liberation Mono", monospace' stroke="#a9b7c6" stroke-width="0.12">    }</text>
<text x="284.4" y="172.695" fill="#a9b7c6" font-size="7.63" font-family='"Liberation Mono", monospace' stroke="#a9b7c6" stroke-width="0.12">}</text>
<path d="M1000.2,61.5 l2.2,2.3 l4.6,-4.8" fill="none" stroke="#499c54" stroke-width="1.3" />
<rect x="0" y="610.4" width="1024" height="0.7" fill="#323436" />
<rect x="0" y="611" width="1024" height="12.2" fill="#3e3f42" />
<rect x="0" y="623.2" width="1024" height="0.6" fill="#353739" />
<rect x="0" y="623.8" width="1024" height="13" fill="#3e3f42" />
<rect x="21.6" y="614.0" width="1.4" height="1.4" fill="#bdbdbd" />
<rect x="23.7" y="614.0" width="4.4" height="1.4" fill="#bdbdbd" />
<rect x="21.6" y="616.2" width="1.4" height="1.4" fill="#bdbdbd" />
<rect x="23.7" y="616.2" width="4.4" height="1.4" fill="#bdbdbd" />
<rect x="21.6" y="618.4" width="1.4" height="1.4" fill="#bdbdbd" />
<rect x="23.7" y="618.4" width="4.4" height="1.4" fill="#bdbdbd" />
<text x="32" y="619.3" fill="#bbbbbb" font-size="7.79" font-family='"Liberation Sans", sans-serif' textLength="20.1" lengthAdjust="spacing" stroke="#bbbbbb" stroke-width="0.22">TODO</text>
<rect x="67.7" y="612.8" width="7.2" height="7.2" fill="#bdbdbd" />
<path d="M69.2,614.5 l2,1.5 l-2,1.5" fill="none" stroke="#3e3f42" stroke-width="0.8" />
<line x1="71.5" y1="618.8" x2="73.5" y2="618.8" stroke="#3e3f42" stroke-width="0.7" />
<text x="78.5" y="619.3" fill="#bbbbbb" font-size="7.79" font-family='"Liberation Sans", sans-serif' textLength="30.8" lengthAdjust="spacing" stroke="#bbbbbb" stroke-width="0.22">Terminal</text>
<line x1="123.8" y1="615.0" x2="127.8" y2="612.6" stroke="#bdbdbd" stroke-width="2.2" />
<line x1="126.6" y1="614.2" x2="130.9" y2="619.2" stroke="#bdbdbd" stroke-width="1.8" />
<text x="134.1" y="619.3" fill="#bbbbbb" font-size="7.79" font-family='"Liberation Sans", sans-serif' textLength="18.2" lengthAdjust="spacing" stroke="#bbbbbb" stroke-width="0.22">Build</text>
<rect x="166.7" y="613.5" width="7" height="1.2" fill="#bdbdbd" />
<rect x="166.7" y="615.7" width="5" height="1.2" fill="#bdbdbd" />
<rect x="166.7" y="617.9" width="7" height="1.2" fill="#bdbdbd" />
<text x="177.7" y="619.3" fill="#bbbbbb" font-size="7.79" font-family='"Liberation Sans", sans-serif' textLength="35.5" lengthAdjust="spacing" stroke="#bbbbbb" stroke-width="0.22">6: Logcat</text>
<rect x="177.7" y="620.6" width="4.6" height="0.6" fill="#bbbbbb" />
<path d="M226.6,619.6 a4.3,4.3 0 0 1 8.6,0" fill="none" stroke="#bdbdbd" stroke-width="1.3" />
<line x1="230.9" y1="619.4" x2="232.8" y2="616.3" stroke="#bdbdbd" stroke-width="1.1" />
<text x="237.7" y="619.3" fill="#bbbbbb" font-size="7.79" font-family='"Liberation Sans", sans-serif' textLength="25.8" lengthAdjust="spacing" stroke="#bbbbbb" stroke-width="0.22">Profiler</text>
<ellipse cx="284.4" cy="614.0" rx="3.5" ry="1.3" fill="none" stroke="#bdbdbd" stroke-width="0.9"/>
<ellipse cx="284.4" cy="616.3" rx="3.5" ry="1.3" fill="none" stroke="#bdbdbd" stroke-width="0.9"/>
<ellipse cx="284.4" cy="618.6" rx="3.5" ry="1.3" fill="none" stroke="#bdbdbd" stroke-width="0.9"/>
<text x="291.8" y="619.3" fill="#bbbbbb" font-size="7.79" font-family='"Liberation Sans", sans-serif' textLength="70.7" lengthAdjust="spacing" stroke="#bbbbbb" stroke-width="0.22">Database Inspector</text>
<circle cx="867" cy="617.1" r="3.9" fill="#499c54" />
<text x="865.6" y="619.6" fill="#ffffff" font-size="6" font-family='"Liberation Sans", sans-serif' font-weight="bold" stroke="#ffffff" stroke-width="0.11">1</text>
<text x="874.1" y="619.3" fill="#bbbbbb" font-size="7.79" font-family='"Liberation Sans", sans-serif' textLength="35.9" lengthAdjust="spacing" stroke="#bbbbbb" stroke-width="0.22">Event Log</text>
<rect x="926.2" y="612.8" width="6.5" height="5.2" fill="none" stroke="#bdbdbd" stroke-width="0.8"/>
<line x1="926.2" y1="614.2" x2="932.7" y2="614.2" stroke="#bdbdbd" stroke-width="0.8" />
<circle cx="931.3" cy="617.6" r="1.6" fill="#3e3f42" stroke="#bdbdbd" stroke-width="0.8"/>
<line x1="932.4" y1="618.7" x2="934.2" y2="620.4" stroke="#bdbdbd" stroke-width="0.9" />
<text x="937" y="619.3" fill="#bbbbbb" font-size="7.79" font-family='"Liberation Sans", sans-serif' textLength="62" lengthAdjust="spacing" stroke="#bbbbbb" stroke-width="0.22">Layout Inspector</text>
<rect x="4.5" y="626.5" width="7.5" height="7.5" fill="none" stroke="#9a9a9a" stroke-width="0.9"/>
<path d="M6.5,626.5 v-1.8 h7.3 v7.3 h-1.8" fill="none" stroke="#9a9a9a" stroke-width="0.9" />
<text x="21.4" y="633" fill="#b6b6b6" font-size="7.89" font-family='"Liberation Sans", sans-serif' textLength="362.6" lengthAdjust="spacing" stroke="#b6b6b6" stroke-width="0.22">Opens the Android virtual device (AVD) manager which manages emulator images and snapshots</text>
<text x="849.3" y="633" fill="#bbbbbb" font-size="7.89" font-family='"Liberation Sans", sans-serif' textLength="10.1" lengthAdjust="spacing" stroke="#bbbbbb" stroke-width="0.22">1:1</text>
<text x="867.9" y="633" fill="#bbbbbb" font-size="7.89" font-family='"Liberation Sans", sans-serif' textLength="8.9" lengthAdjust="spacing" stroke="#bbbbbb" stroke-width="0.22">LF</text>
<text x="885.3" y="633" fill="#bbbbbb" font-size="7.89" font-family='"Liberation Sans", sans-serif' textLength="23.5" lengthAdjust="spacing" stroke="#bbbbbb" stroke-width="0.22">UTF-8</text>
<text x="916.9" y="633" fill="#bbbbbb" font-size="7.89" font-family='"Liberation Sans", sans-serif' textLength="33.6" lengthAdjust="spacing" stroke="#bbbbbb" stroke-width="0.22">4 spaces</text>
<path d="M958.6,628.8 v-1.8 a1.9,1.9 0 0 1 3.8,0" fill="none" stroke="#bdbdbd" stroke-width="0.9" />
<rect x="960.3" y="629.5" width="5.5" height="4.3" fill="#bdbdbd" />
<circle cx="978.8" cy="630" r="4.6" fill="#c4c4c4" />
<rect x="977" y="628.2" width="1" height="1.6" fill="#3e3f42" />
<rect x="980.4" y="628.2" width="1" height="1.6" fill="#3e3f42" />
<rect x="976.8" y="631.2" width="4" height="0.8" fill="#3e3f42" />
<circle cx="994" cy="630" r="4.6" fill="#c4c4c4" />
<rect x="992.3" y="628.2" width="1" height="1.6" fill="#3e3f42" />
<rect x="995.6" y="628.2" width="1" height="1.6" fill="#3e3f42" />
<path d="M992.2,632.6 q1.8,-1.3 3.6,0" fill="none" stroke="#3e3f42" stroke-width="0.8" />
<rect x="1007" y="626.2" width="6.6" height="2.5" fill="#bdbdbd" />
<rect x="1006.2" y="628.8" width="8.2" height="0.9" fill="#bdbdbd" />
<rect x="1007.6" y="630.2" width="5.4" height="2.6" fill="#bdbdbd" />
<rect x="1006.5" y="633.2" width="7.6" height="1.3" fill="#bdbdbd" />
<rect x="652.5" y="37.5" width="173" height="85.5" fill="rgba(0,0,0,0.35)" rx="1.5" filter="url(#blur)"/>
<defs><filter id="blur" x="-10%" y="-10%" width="120%" height="130%"><feGaussianBlur stdDeviation="1.2"/></filter></defs>
<rect x="654" y="37.8" width="170" height="83.6" fill="#3e3f42" />
<rect x="654" y="37.8" width="170" height="83.6" fill="none" stroke="#2b2b2b" stroke-width="0.7"/>
<text x="672.2" y="46.6" fill="#bbbbbb" font-size="6.46" font-family='"Liberation Sans", sans-serif' textLength="52.8" lengthAdjust="spacing" stroke="#bbbbbb" stroke-width="0.22">Available devices</text>
<rect x="661.9" y="53.9" width="5" height="7.2" fill="none" rx="0.8" stroke="#9ca3aa" stroke-width="0.9"/>
<rect x="664.6" y="57.9" width="5.6" height="5" fill="#3e3f42" />
<rect x="665.3" y="58.5" width="4.6" height="4.0" fill="#5a4377" rx="0.6" stroke="#9876c8" stroke-width="0.8"/>
<line x1="666.2" y1="60.5" x2="669.0" y2="60.5" stroke="#9876c8" stroke-width="0.6" />
<text x="672.2" y="60.9" fill="#bbbbbb" font-size="9.03" font-family='"Liberation Sans", sans-serif' textLength="70.3" lengthAdjust="spacing" stroke="#bbbbbb" stroke-width="0.22">Nexus 10 API 30</text>
<rect x="661.9" y="67.0" width="5" height="7.2" fill="none" rx="0.8" stroke="#9ca3aa" stroke-width="0.9"/>
<rect x="664.6" y="71.0" width="5.6" height="5" fill="#3e3f42" />
<rect x="665.3" y="71.60000000000001" width="4.6" height="4.0" fill="#5a4377" rx="0.6" stroke="#9876c8" stroke-width="0.8"/>
<line x1="666.2" y1="73.60000000000001" x2="669.0" y2="73.60000000000001" stroke="#9876c8" stroke-width="0.6" />
<text x="672.2" y="74" fill="#bbbbbb" font-size="9.03" font-family='"Liberation Sans", sans-serif' textLength="71.8" lengthAdjust="spacing" stroke="#bbbbbb" stroke-width="0.22">Nexus 6P API 30</text>
<rect x="654" y="78" width="170" height="0.8" fill="#4b4e50" />
<path d="M661.5,81.8 L668.3,85.4 L661.5,89 z" fill="#499c54" />
<text x="672.2" y="89" fill="#bbbbbb" font-size="9.03" font-family='"Liberation Sans", sans-serif' textLength="103.8" lengthAdjust="spacing" stroke="#bbbbbb" stroke-width="0.22">Run on Multiple Devices</text>
<rect x="654" y="92.9" width="170" height="12.9" fill="#2f65ca" />
<rect x="661.8" y="95.6" width="4.8" height="7.6" fill="none" rx="0.6" stroke="#c8b48a" stroke-width="0.9"/>
<rect x="663.6" y="100.6" width="7" height="5" fill="#2f65ca" />
<path d="M664.2,105.0 C664.2,102.3 665.4000000000001,102.0 667.2,102.0 C669.0,102.0 670.2,102.3 670.2,105.0 z" fill="#3ddc84" />
<line x1="665.5200000000001" y1="101.16" x2="666.1800000000001" y2="102.75" stroke="#3ddc84" stroke-width="0.6000000000000001" />
<line x1="668.88" y1="101.16" x2="668.22" y2="102.75" stroke="#3ddc84" stroke-width="0.6000000000000001" />
<text x="672.2" y="101.9" fill="#ffffff" font-size="9.03" font-family='"Liberation Sans", sans-serif' textLength="57.6" lengthAdjust="spacing" stroke="#ffffff" stroke-width="0.22">AVD Manager</text>
<rect x="654" y="106.2" width="170" height="0.7" fill="#4b4e50" />
<rect x="661" y="110.2" width="1.3" height="5.6" fill="#bdbdbd" />
<rect x="663" y="110.2" width="4" height="1.2" fill="#bdbdbd" />
<rect x="663" y="112.4" width="4" height="1.2" fill="#bdbdbd" />
<rect x="663" y="114.6" width="4" height="1.2" fill="#bdbdbd" />
<text x="672.2" y="116.9" fill="#bbbbbb" font-size="9.03" font-family='"Liberation Sans", sans-serif' textLength="144.6" lengthAdjust="spacing" stroke="#bbbbbb" stroke-width="0.22">Troubleshoot Device Connections</text>
</g>
<rect x="1.3" y="2.3" width="1019.9" height="633.2" fill="none" rx="5" stroke="rgba(255,255,255,0.13)" stroke-width="0.7"/>
</svg>
</body></html>
